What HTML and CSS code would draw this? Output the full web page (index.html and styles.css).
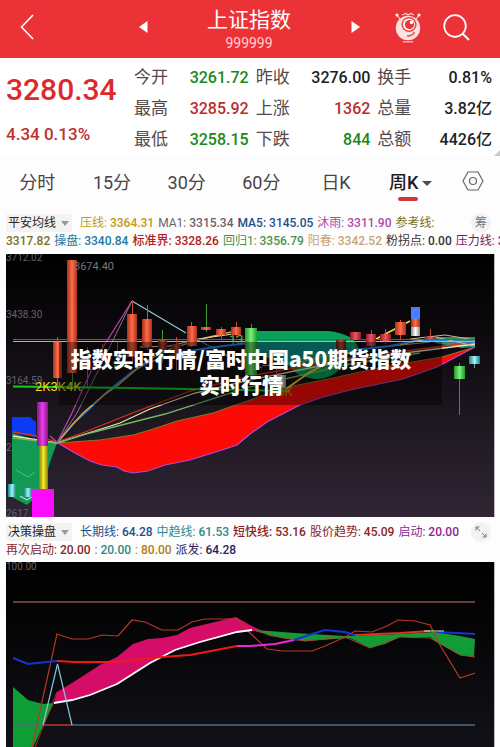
FILE: index.html
```
<!DOCTYPE html>
<html lang="zh-CN">
<head>
    <meta charset="UTF-8">
    <meta name="viewport" content="width=device-width, initial-scale=1.0">
    <title>上证指数 999999</title>
    <link rel="stylesheet" href="styles.css">
</head>
<body>

    <header class="topbar">
        <div class="side">
            <button class="icon-btn" type="button" aria-label="返回">
                <svg width="14" height="26" viewBox="0 0 14 26"><path d="M13 1 L1.500 13 L13 25" fill="none" stroke="#fff" stroke-width="1.600"/></svg>
            </button>
        </div>
        <div class="switcher">
            <button class="icon-btn" type="button" aria-label="上一个">
                <svg width="9" height="12" viewBox="0 0 9 12"><path d="M8.500 0 V12 L0 6 Z" fill="#fff"/></svg>
            </button>
            <div class="name">
                <h1>上证指数</h1>
                <p>999999</p>
            </div>
            <button class="icon-btn" type="button" aria-label="下一个">
                <svg width="9" height="12" viewBox="0 0 9 12"><path d="M0.500 0 V12 L9 6 Z" fill="#fff"/></svg>
            </button>
        </div>
        <div class="side side-right">
            <button class="icon-btn" type="button" aria-label="助手">
                <svg width="26" height="31" viewBox="0 0 26 31">
                    <path d="M1 2 L5 7 M25 2 L21 7 M7 3 L11 1.500 L13 3 L16 1.500 L19 3" fill="none" stroke="#fbd3d3" stroke-width="1.200"/>
                    <circle cx="2" cy="3" r="1.600" fill="#fff"/>
                    <circle cx="24" cy="3" r="1.600" fill="#fff"/>
                    <circle cx="13" cy="16" r="12.200" fill="#fde0e0"/>
                    <circle cx="14" cy="12.500" r="7.600" fill="#e8474b"/>
                    <circle cx="14" cy="12.500" r="6" fill="#fff"/>
                    <circle cx="14.500" cy="12.500" r="4.600" fill="#e8373b"/>
                    <circle cx="16.500" cy="10.500" r="1.800" fill="#fff"/>
                    <path d="M12 24 Q18 24 19.500 20" fill="none" stroke="#e8474b" stroke-width="1.300"/>
                    <path d="M8 29.800 H18" stroke="#fbd3d3" stroke-width="1.200"/>
                </svg>
            </button>
            <button class="icon-btn" type="button" aria-label="搜索">
                <svg width="27" height="27" viewBox="0 0 27 27"><circle cx="12" cy="12" r="10.800" fill="none" stroke="#fff" stroke-width="1.700"/><path d="M19.500 19.500 L26 26" stroke="#fff" stroke-width="2"/></svg>
            </button>
        </div>
    </header>

    <section class="quote">
        <div class="price">
            <strong>3280.34</strong>
            <span>4.34 0.13%</span>
        </div>
        <dl class="stats">
            <div><dt>今开</dt><dd class="down">3261.72</dd></div>
            <div><dt>昨收</dt><dd>3276.00</dd></div>
            <div><dt>换手</dt><dd>0.81%</dd></div>
            <div><dt>最高</dt><dd class="up">3285.92</dd></div>
            <div><dt>上涨</dt><dd class="up">1362</dd></div>
            <div><dt>总量</dt><dd>3.82亿</dd></div>
            <div><dt>最低</dt><dd class="down">3258.15</dd></div>
            <div><dt>下跌</dt><dd class="down">844</dd></div>
            <div><dt>总额</dt><dd>4426亿</dd></div>
        </dl>
    </section>

    <nav class="tabs">
        <button type="button">分时</button>
        <button type="button">15分</button>
        <button type="button">30分</button>
        <button type="button">60分</button>
        <button type="button">日K</button>
        <button type="button" class="active">周K</button>
        <button type="button" class="setting" aria-label="设置">
            <svg width="22" height="20" viewBox="0 0 22 20"><path d="M6 1 H16 L21 10 L16 19 H6 L1 10 Z" fill="none" stroke="#666" stroke-width="1.200"/><circle cx="11" cy="10" r="3.500" fill="none" stroke="#666" stroke-width="1.200"/></svg>
        </button>
    </nav>

    <section class="legend">
        <div class="row">
            <div class="picker">
                <select aria-label="主图指标"><option>平安均线</option></select>
            </div>
            <span class="gold">压线:<b>3364.31</b></span>
            <span class="gray">MA1:<b>3315.34</b></span>
            <span class="navy strong">MA5:<b>3145.05</b></span>
            <span class="violet">沐雨:<b>3311.90</b></span>
            <span class="olive">参考线:</span>
            <button class="round" type="button">筹</button>
        </div>
        <div class="row">
            <span class="olive"><b class="first">3317.82</b></span>
            <span class="blue">操盘:<b>3340.84</b></span>
            <span class="red strong">标准界:<b>3328.26</b></span>
            <span class="green">回归1:<b>3356.79</b></span>
            <span class="tan">阳春:<b>3342.52</b></span>
            <span class="dark">粉拐点:<b>0.00</b></span>
            <span class="plum">压力线:<b>3</b></span>
        </div>
    </section>

    <section class="chart">
        <svg viewBox="6 4 488 263" role="img" aria-label="周K线">
            <defs>
                <linearGradient id="bg" x1="0" y1="0" x2="0" y2="1"><stop offset="0" stop-color="#000"/><stop offset="0.300" stop-color="#0c090d"/><stop offset="0.700" stop-color="#211a24"/><stop offset="1" stop-color="#2f2534"/></linearGradient>
                <linearGradient id="up"><stop offset="0" stop-color="#a8301c"/><stop offset="0.500" stop-color="#ff6e48"/><stop offset="1" stop-color="#a8301c"/></linearGradient>
                <linearGradient id="rose"><stop offset="0" stop-color="#8e1c26"/><stop offset="0.500" stop-color="#ee5560"/><stop offset="1" stop-color="#8e1c26"/></linearGradient>
                <linearGradient id="brown"><stop offset="0" stop-color="#5c1c14"/><stop offset="0.500" stop-color="#b84a34"/><stop offset="1" stop-color="#5c1c14"/></linearGradient>
                <linearGradient id="lime"><stop offset="0" stop-color="#1d9a2a"/><stop offset="0.500" stop-color="#7df07a"/><stop offset="1" stop-color="#1d9a2a"/></linearGradient>
                <linearGradient id="cyan"><stop offset="0" stop-color="#12848c"/><stop offset="0.500" stop-color="#a8f4f6"/><stop offset="1" stop-color="#12848c"/></linearGradient>
                <linearGradient id="pale"><stop offset="0" stop-color="#888"/><stop offset="0.500" stop-color="#fff"/><stop offset="1" stop-color="#888"/></linearGradient>
                <linearGradient id="magenta"><stop offset="0" stop-color="#8a148a"/><stop offset="0.500" stop-color="#e640e6"/><stop offset="1" stop-color="#8a148a"/></linearGradient>
                <linearGradient id="yellow"><stop offset="0" stop-color="#8a7a10"/><stop offset="0.500" stop-color="#f6ee20"/><stop offset="1" stop-color="#8a7a10"/></linearGradient>
            </defs>
            <rect x="6" y="4" width="488" height="263" fill="url(#bg)"/>

            <!-- axis labels -->
            <g class="axis">
                <text x="6" y="11">3712.02</text>
                <text x="6" y="68">3438.30</text>
                <text x="6" y="134">3164.59</text>
                <text x="6" y="201">2890.87</text>
                <text x="6" y="267">2617.16</text>
            </g>

            <!-- filled bands -->
            <path d="M250 81 H328 Q340 82 352 88 L358 96 Q345 104 344 112 Q336 129 315 129 Q296 127 287 114 L256 104 Z" fill="#08a05a"/>
            <path d="M257 91 H350 L345 102 Q325 108 312 106 Q295 118 285 110 L257 104 Z" fill="#0e938c"/>
            <path d="M435 87 L475 87 V97 L462 98 L435 93 Z" fill="#2f8a68"/>
            <path d="M12 167 H30 L36 172 V187 L12 183 Z" fill="#0a3cf5"/>
            <path d="M12 183 L36 190 L57 193 L50 212 L44 235 L36 247 L27 255 L12 247 Z" fill="#129a55"/>
            <path d="M58 193 L100 190 L133 185 L150 180 L177 171 L213 163 L250 150 L283 138 L333 128 L383 117 L442 107 L475 97 L437 117 L403 129 L350 140 L323 147 L300 155 L267 172 L250 184 L237 195 L222 200 L190 210 L165 215 L148 221 L133 223 L124 221 L117 217 L102 215 L90 211 L75 203 Z" fill="#fb0a06"/>

            <g fill="none">
                <path d="M58 193 L100 190 L133 185 L150 180 L177 171 L213 163 L250 150 L283 138 L333 128 L383 117 L442 107 L475 97" stroke="#8a7a1e"/>
                <path d="M50 186 L58 193 L75 203 L90 211 L102 215 L117 217 L124 221 L133 223 L148 221 L165 215 L190 210 L222 200 L237 195 L250 184 L267 172 L300 155 L323 147 L350 140 L403 129 L437 117 L475 97" stroke="#b04ad8" stroke-width="1.200"/>
                <path d="M13 182 L36 186 L57 192 L85 182 L130 164 L190 141 L250 126 L350 108 L475 92" stroke="#d8321e" stroke-width="1.300"/>
                <path d="M13 186 L57 193 L85 184 L120 173 L150 159 L195 143 L250 130 L350 110 L475 94" stroke="#f0e4b4" stroke-width="1.300"/>
                <path d="M13 188 L57 193 L90 183 L165 164 L250 137 L350 114 L420 103" stroke="#74b860" stroke-width="1.300"/>
                <path d="M57 193 L75 172 L90 158 L107 142 L133 121 L150 112 L183 102 L215 97 L250 93" stroke="#1d86f5" stroke-width="1.800"/>
                <path d="M57 193 L72 175 L83 163 L104 145 L117 136 L137 119 L150 109 L170 99 L205 88 L240 80" stroke="#e0a03a" stroke-width="1.300"/>
                <path d="M57 193 L72 163 L86 132 L100 102 L132 51" stroke="#c440b4" stroke-width="1.200"/>
                <path d="M58 192 L77 163 L100 117 L132 51" stroke="#8b7686"/>
                <path d="M132 51 L186 83" stroke="#8fd0dc" stroke-width="1.200"/>
                <path d="M198 90 L230 107 L262 118" stroke="#4f9fe0"/>
                <path d="M140 97 L170 96 L198 89 L240 83" stroke="#e6d6b0"/>
                <path d="M286 139 L310 122 L358 98" stroke="#f0d024" stroke-width="1.800"/>
                <path d="M262 116 L300 112 L345 101 L430 92" stroke="#a8a0a0"/>
                <path d="M376 89 L410 71" stroke="#f4d03a" stroke-width="1.800"/>
                <path d="M345 101 L390 96 L420 90 L475 92" stroke="#1d86f5" stroke-width="1.800"/>
                <path d="M400 95 L435 87 L475 96 M410 89 L445 85 L475 90" stroke="#d8b47e"/>
                <path d="M13 89.500 H475" stroke="#734a90"/>
                <path d="M13 91.500 H475" stroke="#9ab8cd" stroke-width="1.200"/>
                <path d="M13 136.500 L130 138 L290 141" stroke="#14d020" stroke-width="2"/>
                <path d="M16 220 L28 227 L35 222" stroke="#55ba86"/>
                <path d="M20 246 L27 250 L33 246" stroke="#d4fff0"/>
            </g>

            <!-- wicks -->
            <g stroke="#d0472e">
                <path d="M57.500 87 V138 M132.500 50 V112 M176.500 87 V120 M191.500 72 V97 M221.500 77 V90 M236.500 72 V88 M87.500 97 V137 M102.500 94 V112 M371.500 80 V99 M385.500 79 V94 M400.500 70 V90 M430.500 79 V90 M459.500 128 V165 M276.500 116 V128"/>
            </g>
            <g stroke="#3c9c32">
                <path d="M72.500 120 V138 M147.500 55 V100 M162.500 80 V112 M206.500 54 V82 M251.500 74 V130 M117.500 92 V118 M459.500 113 V118"/>
            </g>
            <path d="M474.500 106 V118" stroke="#52a8ae"/>

            <!-- candles -->
            <g fill="url(#up)">
                <rect x="53" y="92" width="9" height="36"/>
                <rect x="67" y="10" width="10" height="113"/>
                <rect x="127" y="64" width="10" height="43"/>
                <rect x="142" y="69" width="10" height="28"/>
                <rect x="187" y="76" width="10" height="20"/>
                <rect x="201" y="77" width="10" height="3"/>
                <rect x="216" y="79" width="10" height="6"/>
                <rect x="231" y="77" width="10" height="8"/>
                <rect x="395" y="72" width="11" height="13"/>
                <rect x="411" y="69" width="9" height="8"/>
            </g>
            <g fill="url(#brown)">
                <rect x="158" y="90" width="9" height="12"/>
                <rect x="172" y="94" width="9" height="13"/>
                <rect x="336" y="90" width="10" height="17"/>
                <rect x="83" y="112" width="9" height="5"/>
            </g>
            <g fill="url(#rose)">
                <rect x="350" y="82" width="11" height="8"/>
                <rect x="366" y="84" width="10" height="12"/>
                <rect x="380" y="84" width="11" height="7"/>
                <rect x="425" y="87" width="11" height="2"/>
            </g>
            <rect x="245" y="78" width="12" height="47" fill="url(#lime)"/>
            <rect x="454" y="116" width="11" height="13" fill="url(#lime)"/>
            <rect x="114" y="115" width="6" height="4" fill="#2ca02c"/>
            <rect x="469" y="106" width="11" height="8" fill="url(#cyan)"/>
            <rect x="8" y="234" width="8" height="13" fill="url(#cyan)"/>
            <rect x="24" y="238" width="8" height="9" fill="url(#cyan)"/>
            <rect x="411" y="57" width="9" height="12" fill="#4a80ff"/>
            <rect x="411" y="77" width="9" height="9" fill="url(#pale)"/>
            <rect x="276" y="125" width="10" height="13" fill="url(#pale)"/>
            <rect x="37" y="152" width="11" height="44" fill="url(#magenta)"/>
            <rect x="39" y="196" width="9" height="43" fill="url(#yellow)"/>
            <rect x="32" y="239" width="22" height="28" fill="#fb0cfb"/>

            <text class="peak" x="74" y="20">3674.40</text>
            <text class="mark" x="35" y="141" fill="#e4dc20">2K3K4K</text>
            <text class="mark" x="229" y="94" fill="#58b848">13</text>
            <text class="mark" x="270" y="146" fill="#b09c20">10K</text>
        </svg>
        <p class="caption">指数实时行情/富时中国a50期货指数<br>实时行情</p>
    </section>

    <section class="legend">
        <div class="row">
            <div class="picker">
                <select aria-label="副图指标"><option>决策操盘</option></select>
            </div>
            <span class="navy">长期线:<b>64.28</b></span>
            <span class="teal">中趋线:<b>61.53</b></span>
            <span class="maroon strong">短快线:<b>53.16</b></span>
            <span class="maroon">股价趋势:<b>45.09</b></span>
            <span class="purple">启动:<b>20.00</b></span>
            <button class="round" type="button" aria-label="放大">
                <svg width="12" height="12" viewBox="0 0 12 12"><path d="M5 5 L1 1 M1 4.500 V1 H4.500 M7 7 L11 11 M11 7.500 V11 H7.500" fill="none" stroke="#777"/></svg>
            </button>
        </div>
        <div class="row">
            <span class="maroon">再次启动:<b>20.00</b></span>
            <span class="teal">:<b>20.00</b></span>
            <span class="amber">:<b>80.00</b></span>
            <span class="indigo">派发:<b>64.28</b></span>
        </div>
    </section>

    <section class="chart">
        <svg viewBox="6 2 488 185" role="img" aria-label="决策操盘">
            <defs>
                <linearGradient id="bg2" x1="0" y1="0" x2="0" y2="1"><stop offset="0" stop-color="#000"/><stop offset="0.400" stop-color="#060608"/><stop offset="1" stop-color="#121118"/></linearGradient>
            </defs>
            <rect x="6" y="2" width="488" height="185" fill="url(#bg2)"/>
            <g class="axis"><text x="6" y="10">100.00</text></g>

            <path d="M13 127 L28 140 L43 144 L54 143 L33 187 H13 Z" fill="#0f9d36"/>
            <path d="M54 143 L57 132 L72 123 L100 105 L117 97 L133 84 L148 79 L162 78 L177 75 L190 68 L215 62 L236 57 L250 65 L262 71 L250 71 L237 72 L200 82 L175 90 L150 103 L117 124 L90 135 L72 140 Z" fill="#d50d68"/>
            <path d="M256 70 L295 73 L345 76 L400 74 L435 72 L460 76 L475 79 L474 97 L460 95 L440 84 L430 77 L400 77 L385 84 L370 88 L350 78 L305 81 L270 76 Z" fill="#129c38"/>

            <g fill="none">
                <path d="M13 42 H475" stroke="#84564c" stroke-width="1.500"/>
                <path d="M13 165 H475" stroke="#4f6a85" stroke-width="1.500"/>
                <path d="M43 165 H72" stroke="#a82218" stroke-width="1.500"/>
                <path d="M32 187 L57 74 L72 79 L88 79 L102 75 L118 76 L132 60 L145 62 L162 70 L178 70 L192 62 L205 59 L237 59 L250 73 L267 89 L283 91 L312 91 L325 86 L345 77 L355 71 L372 72 L387 66 L398 60 L415 61 L430 65 L440 85 L460 118 L475 113" stroke="#b83824" stroke-width="1.200"/>
                <path d="M35 187 L57 132" stroke="#a83220"/>
                <path d="M256 71 L283 78 L305 81 L345 77 L370 88 L400 77 L430 78 L460 95 L475 97" stroke="#a04a24"/>
                <path d="M54 143 L72 140 L90 135 L117 124 L150 103 L175 90 L200 82 L237 72 L252 70" stroke="#fff" stroke-width="1.800"/>
                <path d="M13 98 L28 104 L57 101" stroke="#1632d0" stroke-width="2"/>
                <path d="M57 101 L75 102 L117 102 L162 97 L190 95 L237 86" stroke="#f01818" stroke-width="2"/>
                <path d="M237 86 H250 L275 84 L294 80" stroke="#ee28d8" stroke-width="2"/>
                <path d="M294 80 L312 74 L325 70 L345 72 L355 75 M438 72 L475 74" stroke="#1632d0" stroke-width="2"/>
                <path d="M355 75 L400 73 L430 71" stroke="#e03020" stroke-width="2"/>
                <path d="M424 71 L444 71" stroke="#e8e0c8"/>
                <path d="M43 165 L57.500 104 L72 165" stroke="#86c4dc" stroke-width="1.200"/>
            </g>
        </svg>
    </section>

</body>
</html>
```
FILE: styles.css
```
* {
    box-sizing: border-box;
    margin: 0;
    padding: 0;
}
body {
    font-family: Roboto, "Noto Sans CJK SC", sans-serif;
    background: #fdfdfd;
    color: #222;
    overflow-x: hidden;
}
button {
    font: inherit;
    color: inherit;
    background: none;
    border: 0;
}
svg {
    display: block;
}

/* top bar */
.topbar {
    display: flex;
    align-items: center;
    height: 58px;
    padding: 0 30px 4px 20px;
    background: #eb3337;
    color: #fff;
}
.side {
    flex: 1;
    display: flex;
    align-items: center;
}
.side-right {
    justify-content: flex-end;
    gap: 22px;
}
.switcher {
    display: flex;
    align-items: center;
    justify-content: space-between;
    width: 221px;
    margin-left: 8px;
}
.name {
    padding-top: 5px;
    text-align: center;
}
.name h1 {
    font-size: 21px;
    line-height: 26px;
    font-weight: normal;
}
.name p {
    font-size: 14px;
    line-height: 20px;
    color: #fbd0d0;
}

/* quote */
.quote {
    position: relative;
    display: flex;
    padding: 4px 8px 1px 6px;
    background: #fff;
}
.quote::after {
    content: "";
    position: absolute;
    right: 0;
    bottom: 0;
    border: 3px solid;
    border-color: transparent #ccc #ccc transparent;
}
.price {
    width: 128px;
    color: #dc2a2c;
}
.price strong {
    display: block;
    font-size: 30px;
    line-height: 56px;
    font-weight: 500;
}
.price span {
    display: block;
    font-size: 17px;
    line-height: 32px;
    font-weight: 500;
    color: #c03030;
}
.stats {
    flex: 1;
    display: grid;
    grid-template-columns: repeat(3, 1fr);
    column-gap: 7px;
}
.stats div {
    display: flex;
    justify-content: space-between;
    font-size: 17px;
    line-height: 31px;
}
.stats dt {
    color: #544a4c;
}
.stats dd {
    font-size: 16px;
    font-weight: 500;
}
.stats .up {
    color: #b92e2c;
}
.stats .down {
    color: #188a1c;
}

/* period tabs */
.tabs {
    display: flex;
    height: 53px;
}
.tabs button {
    flex: 1;
    padding-bottom: 4px;
    font-size: 18px;
    color: #4a4244;
}
.tabs .active {
    position: relative;
    font-weight: 500;
    color: #221a1c;
}
.tabs .active::before {
    content: "";
    position: absolute;
    left: 50%;
    bottom: 8px;
    width: 20px;
    height: 4px;
    margin-left: -13px;
    border-radius: 2px;
    background: #cc3a3c;
}
.tabs .active::after {
    content: "";
    display: inline-block;
    margin-left: 4px;
    vertical-align: middle;
    border: 5px solid transparent;
    border-top-color: #554c4e;
    border-bottom: 0;
}
.tabs .setting {
    flex: 0 0 52px;
    padding-left: 14px;
}

/* indicator legend */
.legend {
    padding: 5px 0 4px 6px;
    overflow: hidden;
}
.chart + .legend {
    padding: 6px 0 3px 6px;
}
.row {
    display: flex;
    align-items: center;
    gap: 4px;
    height: 18px;
    font-size: 12px;
    line-height: 18px;
    white-space: nowrap;
}
.row b {
    margin-left: 3px;
    font-weight: 500;
}
.row .first {
    margin-left: 0;
}
.row .strong {
    font-weight: 500;
}
.picker {
    position: relative;
    margin-right: 4px;
}
.picker select {
    display: block;
    appearance: none;
    width: 66px;
    height: 18px;
    padding-left: 2px;
    border: 0;
    border-radius: 2px;
    background: #f3f3f3;
    color: #2a2224;
    font: 12px Roboto, "Noto Sans CJK SC", sans-serif;
}
.picker::after {
    content: "";
    position: absolute;
    right: 3px;
    top: 7px;
    border: 4px solid transparent;
    border-top: 5px solid #999;
    border-bottom: 0;
    pointer-events: none;
}
.round {
    display: flex;
    align-items: center;
    justify-content: center;
    width: 20px;
    height: 20px;
    margin-left: auto;
    margin-right: 9px;
    border-radius: 50%;
    background: #f2f2f2;
    color: #777;
}

.gold { color: #c09a20; }
.gray { color: #6e6266; }
.navy { color: #1d4f8c; }
.violet { color: #b048b0; }
.olive { color: #75701c; }
.blue { color: #2478a0; }
.red { color: #b01c20; }
.green { color: #4a9050; }
.tan { color: #c8a474; }
.dark { color: #3c3436; }
.plum { color: #7a1860; }
.teal { color: #30888c; }
.maroon { color: #8a2424; }
.purple { color: #8c2890; }
.amber { color: #b07c14; }
.indigo { color: #2c2460; }

/* charts */
.chart {
    position: relative;
    margin: 0 5px 0 6px;
    border-right: 1px solid #bbb;
}
.chart svg {
    width: 100%;
}
.axis text {
    font-size: 10px;
    fill: #66606a;
}
.peak {
    font-size: 11px;
    fill: #77757c;
}
.mark {
    font-size: 13px;
}
.caption {
    position: absolute;
    top: 88px;
    left: 0;
    right: 0;
    width: 383px;
    max-width: 100%;
    margin: 0 auto;
    padding: 3px 28px 8px 10px;
    background: rgba(0, 0, 0, 0.4);
    color: #fff;
    font-family: "Noto Sans CJK SC", sans-serif;
    font-size: 21px;
    line-height: 26px;
    font-weight: 900;
    text-align: center;
    white-space: nowrap;
}
```
